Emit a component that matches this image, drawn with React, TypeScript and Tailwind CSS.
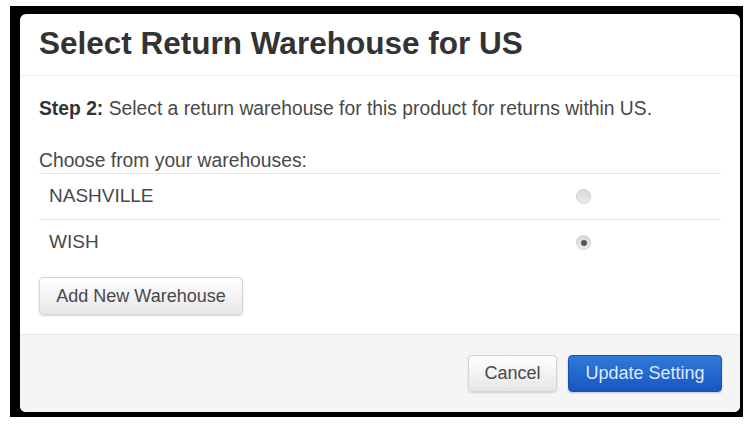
import React from "react";

export default function App() {
  const font = { fontFamily: '"Liberation Sans", Arial, sans-serif' };
  return (
    <div className="w-[750px] h-[425px] bg-white overflow-hidden" style={font}>
      <div className="ml-[10px] mt-[6px] w-[733px] h-[411px] bg-black pt-[8px] pl-[10px] pr-[3px] pb-[5px]">
        <div className="flex flex-col h-full w-full rounded-[6px] bg-white overflow-hidden">
          <div className="h-[62px] shrink-0 border-b border-[#eeeeee] px-[19px] flex items-center">
            <h1 className="text-[31.5px] font-bold text-[#333333] leading-none pb-[2px]">
              Select Return Warehouse for US
            </h1>
          </div>
          <div className="flex-1 px-[19px]">
            <p className="mt-[22px] text-[19.3px] leading-[22px] text-[#484848]">
              <span className="font-bold text-[#333333]">Step 2:</span> Select a return warehouse for this product for returns within US.
            </p>
            <p className="mt-[30px] text-[19.3px] leading-[22px] text-[#484848] mb-[1px]">
              Choose from your warehouses:
            </p>
            <div>
              <div className="h-[46px] border-t border-[#e6e6e6] flex items-center justify-between pl-[10px]">
                <span className="text-[19px] text-[#484848]">NASHVILLE</span>
                <span className="mr-[130px] w-[15px] h-[15px] rounded-full bg-gradient-to-b from-[#d8d8d8] to-[#ececec] border border-[#cfcfcf]" />
              </div>
              <div className="h-[46px] border-t border-[#e6e6e6] flex items-center justify-between pl-[10px]">
                <span className="text-[19px] text-[#484848]">WISH</span>
                <span className="mr-[130px] w-[15px] h-[15px] rounded-full bg-gradient-to-b from-[#d8d8d8] to-[#ececec] border border-[#cfcfcf] flex items-center justify-center">
                  <span className="w-[6px] h-[6px] rounded-full bg-[#555555]" />
                </span>
              </div>
            </div>
            <button className="mt-[12px] h-[38px] w-[204px] rounded-[4px] border border-[#d4d4d4] bg-gradient-to-b from-white to-[#e8e8e8] shadow-[0_1px_2px_rgba(0,0,0,0.15)] text-[18px] text-[#484848]">
              Add New Warehouse
            </button>
          </div>
          <div className="h-[78px] shrink-0 bg-[#f5f5f5] border-t border-[#e5e5e5] flex items-center justify-end pr-[18px] gap-[11px] pb-[1px]">
            <button className="h-[37px] w-[89px] rounded-[4px] border border-[#d4d4d4] bg-gradient-to-b from-white to-[#e6e6e6] shadow-[0_1px_2px_rgba(0,0,0,0.15)] text-[18px] text-[#484848]">
              Cancel
            </button>
            <button className="h-[37px] w-[154px] rounded-[4px] border border-[#1d4fb0] bg-gradient-to-b from-[#2f7ad8] to-[#1a55c4] shadow-[0_1px_2px_rgba(0,0,0,0.2)] text-[18px] text-[#dfe9f8]">
              Update Setting
            </button>
          </div>
        </div>
      </div>
    </div>
  );
}
